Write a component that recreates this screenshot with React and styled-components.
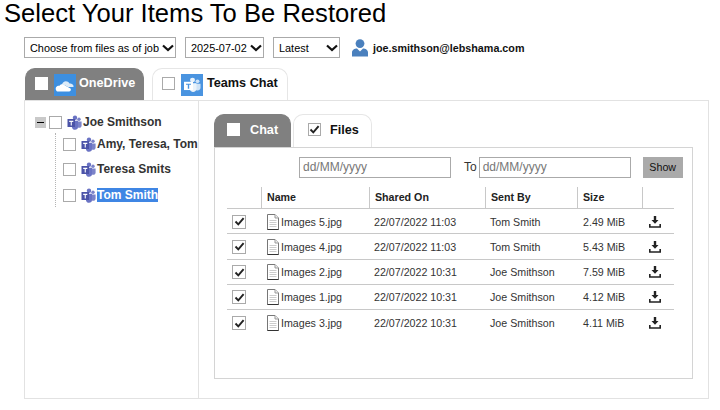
import React from 'react'
import styled, { createGlobalStyle } from 'styled-components'

const GlobalStyle = createGlobalStyle`
  html, body {
    margin: 0;
    padding: 0;
    background: #fff;
    font-family: "Liberation Sans", Arial, sans-serif;
  }
`

const chevron = encodeURIComponent(
  '<svg xmlns="http://www.w3.org/2000/svg" width="12" height="8" viewBox="0 0 12 8"><path d="M1 1.5 L6 6 L11 1.5" fill="none" stroke="#111" stroke-width="2.2"/></svg>'
)

const Page = styled.div`
  width: 720px;
  height: 410px;
  overflow: hidden;
  box-sizing: border-box;
`
const Title = styled.h1`
  margin: 0;
  padding: 0 0 0 4px;
  height: 37px;
  font-size: 25.6px;
  line-height: 26px;
  font-weight: 400;
  color: #000;
`
const Toolbar = styled.div`
  display: flex;
  align-items: center;
  height: 21px;
  padding-left: 24px;
`
const Select = styled.select`
  box-sizing: border-box;
  appearance: none;
  width: ${p => p.$width}px;
  height: 21px;
  margin-right: ${p => p.$gap}px;
  padding: 0 0 0 5px;
  border: 1px solid #aaa;
  border-radius: 0;
  background: #fff url("data:image/svg+xml,${chevron}") no-repeat right 1px center;
  color: #000;
  font-family: inherit;
  font-size: 10.9px;
`
const UserMail = styled.span`
  display: flex;
  align-items: center;
  gap: 5px;
  margin-left: 12px;
  font-size: 10.75px;
  font-weight: 700;
  color: #111;
`
const TabRow = styled.div`
  display: flex;
  align-items: flex-end;
  gap: ${p => p.$gap}px;
  height: ${p => p.$height}px;
  margin-top: ${p => p.$top || 0}px;
  padding-left: ${p => p.$left}px;
`
const Tab = styled.div`
  box-sizing: border-box;
  display: flex;
  align-items: center;
  width: ${p => p.$width}px;
  height: 100%;
  padding: 0 0 3px ${p => p.$pad}px;
  border: 1px solid ${p => (p.$active ? '#e6e6e6' : '#808080')};
  border-bottom: 0;
  border-radius: 10px 10px 0 0;
  background: ${p => (p.$active ? '#fff' : '#808080')};
  color: ${p => (p.$active ? '#111' : '#fff')};
  font-size: 12.67px;
  font-weight: 700;
`
const TabLabel = styled.span`
  margin-left: ${p => p.$left}px;
`
const TabBox = styled.span`
  box-sizing: border-box;
  display: inline-block;
  width: 13px;
  height: 13px;
  background: #fff;
  border: 1px solid ${p => (p.$plain ? '#aaa' : '#fff')};
`
const BrandIcon = styled.svg`
  display: block;
  margin-left: ${p => p.$left}px;
  margin-top: ${p => p.$top || 0}px;
  flex: none;
`
const MainPanel = styled.div`
  box-sizing: border-box;
  display: grid;
  grid-template-columns: 174px 1fr;
  width: 685px;
  height: 299px;
  margin-left: 24px;
  border: 1px solid #e2e2e2;
`
const TreePane = styled.div`
  position: relative;
  border-right: 1px solid #e2e2e2;
  padding-top: 14px;
  overflow: hidden;
`
const TreeRow = styled.div`
  display: flex;
  align-items: center;
  height: 14px;
  margin-bottom: ${p => p.$gap}px;
  padding-left: ${p => p.$left}px;
  font-size: 12px;
  font-weight: 700;
  color: #333;
  white-space: nowrap;
`
const Expander = styled.span`
  display: flex;
  align-items: center;
  justify-content: center;
  width: 11px;
  height: 11px;
  margin-right: 3px;
  background: #c9c9c9;
  &::before {
    content: '';
    width: 7px;
    height: 1px;
    background: #000;
  }
`
const TreeLine = styled.span`
  position: absolute;
  left: 30px;
  top: 32px;
  height: 74px;
  border-left: 1px dotted #b5b5b5;
`
const TreeLabel = styled.span`
  margin-left: 1px;
  background: ${p => (p.$selected ? '#3f86e4' : 'transparent')};
  color: ${p => (p.$selected ? '#fff' : '#333')};
`
const BoxFrame = styled.span`
  box-sizing: border-box;
  display: flex;
  align-items: center;
  justify-content: center;
  flex: none;
  width: ${p => p.$size || 13}px;
  height: ${p => p.$size || 13}px;
  border: 1px solid #aaa;
  background: #fff;
`
const ContentPane = styled.div`
  padding: 13px 15px 0 15px;
`
const FilesPanel = styled.div`
  box-sizing: border-box;
  height: 232px;
  border: 1px solid #d4d4d4;
  padding-top: 9px;
`
const DateRow = styled.div`
  display: flex;
  align-items: center;
  height: 21px;
  padding-left: 84px;
`
const DateInput = styled.div`
  box-sizing: border-box;
  width: 152px;
  height: 21px;
  padding-left: 3px;
  border: 1px solid #aaa;
  color: #777;
  font-size: 12px;
  line-height: 19px;
`
const ToLabel = styled.span`
  margin: 0 2px 0 13px;
  font-size: 12px;
  color: #333;
  position: relative;
  top: -1px;
`
const ShowButton = styled.div`
  width: 40px;
  height: 21px;
  margin-left: 12px;
  background: #aaa;
  color: #111;
  font-size: 10.67px;
  line-height: 21px;
  text-align: center;
`
const Table = styled.div`
  margin: 9px 0 0 12px;
  width: 447px;
`
const Row = styled.div`
  display: grid;
  grid-template-columns: 34px 108px 116px 92px 65px 32px;
  height: ${p => (p.$head ? 22 : 25.25)}px;
  box-sizing: border-box;
  border-bottom: 1px solid #c8c8c8;
  font-size: 10.67px;
  font-weight: ${p => (p.$head ? 700 : 400)};
  color: ${p => (p.$head ? '#222' : '#333')};
  &:last-child {
    border-bottom: 0;
  }
`
const HeadCell = styled.div`
  display: flex;
  align-items: center;
  padding: 0 0 2px 5px;
  border-left: ${p => (p.$first ? '0' : '1px solid #c8c8c8')};
`
const Cell = styled.div`
  display: flex;
  align-items: center;
  gap: 1px;
  padding: 1px 0 0 ${p => p.$left}px;
`

const Check = ({ checked, size }) => (
  <BoxFrame $size={size}>
    {checked && (
      <svg width="11" height="11" viewBox="0 0 11 11">
        <path d="M1.5 5.5 L4.3 8.3 L9.6 2.2" fill="none" stroke="#222" strokeWidth="1.9" />
      </svg>
    )}
  </BoxFrame>
)

const UserIcon = () => (
  <svg width="16" height="18" viewBox="0 0 16 18">
    <circle cx="8" cy="4.6" r="4.4" fill="#4a80bd" />
    <path d="M0 17.5 V13.5 C0 11 2.5 9.5 5 9.5 L8 12.5 L11 9.5 C13.5 9.5 16 11 16 13.5 V17.5 Z" fill="#4a80bd" />
  </svg>
)

const OneDriveIcon = () => (
  <BrandIcon $left={6} $top={3} width="22" height="22" viewBox="0 0 22 22">
    <rect width="22" height="22" fill="#3d8fe0" />
    <path d="M8 11 C8.5 7 13.5 6 15.5 9.5 C18 9.5 20 11 19.5 13 L14 13 L9.5 10.5 Z" fill="#dcebf8" />
    <path d="M2 16 C1 13.5 3 11.5 5.5 11.8 C7 9.5 10 10 11 11.5 L16.5 14.5 C17.5 16 16.5 17.5 15 17.5 H4 C3 17.5 2.5 17 2 16 Z" fill="#fff" />
  </BrandIcon>
)

const TeamsTileIcon = () => (
  <BrandIcon $left={6} $top={3} width="22" height="22" viewBox="0 0 22 24" preserveAspectRatio="none">
    <rect width="22" height="24" fill="#4a94e0" />
    <circle cx="16.5" cy="8" r="2" fill="#cfe3f6" />
    <circle cx="11.5" cy="6.5" r="2.5" fill="#eaf3fb" />
    <path d="M13 10.5 H19.5 V15 C19.5 17 18 18 16.5 18 C14.5 18 13 17 13 15 Z" fill="#cfe3f6" />
    <path d="M9 10 H15.5 V16 C15.5 18 14 19.5 12 19.5 C10.5 19.5 9.5 18.5 9 17.5 Z" fill="#eaf3fb" />
    <rect x="3" y="8.5" width="9" height="9" fill="#fff" />
    <path d="M5 10.5 H10 V11.8 H8.2 V16 H6.8 V11.8 H5 Z" fill="#4a94e0" />
  </BrandIcon>
)

const TeamsIcon = () => (
  <BrandIcon $left={5} width="15" height="15" viewBox="0 0 15 15">
    <circle cx="12" cy="4.2" r="1.7" fill="#7b83c9" />
    <circle cx="8" cy="2.8" r="2.2" fill="#6a73c4" />
    <path d="M10 6.5 H14.6 V10.5 C14.6 12 13.5 12.8 12.2 12.8 C11 12.8 10 12 10 10.5 Z" fill="#7b83c9" />
    <path d="M5 5.8 H11 V12 C11 13.7 9.8 14.8 8 14.8 C6.5 14.8 5.4 14 5 12.5 Z" fill="#6a73c4" />
    <rect x="0.5" y="4" width="7.5" height="8" fill="#4b53a8" />
    <path d="M2.2 5.8 H6.3 V6.9 H4.8 V10.4 H3.7 V6.9 H2.2 Z" fill="#fff" />
  </BrandIcon>
)

const FileIcon = () => (
  <svg width="14" height="16" viewBox="0 0 14 16">
    <path d="M1.5 .5 H9 L12.5 4 V15.5 H1.5 Z" fill="#fff" stroke="#777" />
    <path d="M9 .5 V4 H12.5" fill="#eee" stroke="#999" />
    <path d="M3.5 6.5 H10.5 M3.5 8.5 H10.5 M3.5 10.5 H10.5 M3.5 12.5 H10.5" stroke="#ccc" />
    <path d="M1.5 15.5 H12.5" stroke="#333" />
  </svg>
)

const DownloadIcon = () => (
  <svg width="12" height="12" viewBox="0 0 12 12">
    <path d="M4.8 0 H7.2 V4 H9.5 L6 7.8 L2.5 4 H4.8 Z" fill="#222" />
    <path d="M.8 8 V11 H11.2 V8" fill="none" stroke="#222" strokeWidth="1.6" />
  </svg>
)

const files = [
  { name: 'Images 5.jpg', date: '22/07/2022 11:03', by: 'Tom Smith', size: '2.49 MiB' },
  { name: 'Images 4.jpg', date: '22/07/2022 11:03', by: 'Tom Smith', size: '5.43 MiB' },
  { name: 'Images 2.jpg', date: '22/07/2022 10:31', by: 'Joe Smithson', size: '7.59 MiB' },
  { name: 'Images 1.jpg', date: '22/07/2022 10:31', by: 'Joe Smithson', size: '4.12 MiB' },
  { name: 'Images 3.jpg', date: '22/07/2022 10:31', by: 'Joe Smithson', size: '4.11 MiB' },
]

export default function App() {
  return (
    <Page>
      <GlobalStyle />
      <Title>Select Your Items To Be Restored</Title>
      <Toolbar>
        <Select $width={152} $gap={9} defaultValue="job">
          <option value="job">Choose from files as of job</option>
        </Select>
        <Select $width={79} $gap={9} defaultValue="d">
          <option value="d">2025-07-02</option>
        </Select>
        <Select $width={67} $gap={0} defaultValue="l">
          <option value="l">Latest</option>
        </Select>
        <UserMail>
          <UserIcon />
          joe.smithson@lebshama.com
        </UserMail>
      </Toolbar>
      <TabRow $gap={8} $height={32} $left={25} $top={10}>
        <Tab $width={119} $pad={9}>
          <TabBox />
          <OneDriveIcon />
          <TabLabel $left={3}>OneDrive</TabLabel>
        </Tab>
        <Tab $active $width={136} $pad={9}>
          <TabBox $plain />
          <TeamsTileIcon />
          <TabLabel $left={4}>Teams Chat</TabLabel>
        </Tab>
      </TabRow>
      <MainPanel>
        <TreePane>
          <TreeRow $left={10} $gap={8}>
            <Expander />
            <Check />
            <TeamsIcon />
            <TreeLabel>Joe Smithson</TreeLabel>
          </TreeRow>
          <TreeLine />
          <TreeRow $left={38} $gap={11}>
            <Check />
            <TeamsIcon />
            <TreeLabel>Amy, Teresa, Tom</TreeLabel>
          </TreeRow>
          <TreeRow $left={38} $gap={12}>
            <Check />
            <TeamsIcon />
            <TreeLabel>Teresa Smits</TreeLabel>
          </TreeRow>
          <TreeRow $left={38} $gap={0}>
            <Check />
            <TeamsIcon />
            <TreeLabel $selected>Tom Smith</TreeLabel>
          </TreeRow>
        </TreePane>
        <ContentPane>
          <TabRow $gap={2} $height={33} $left={0}>
            <Tab $width={77} $pad={12}>
              <TabBox />
              <TabLabel $left={10}>Chat</TabLabel>
            </Tab>
            <Tab $active $width={79} $pad={14}>
              <Check checked />
              <TabLabel $left={9}>Files</TabLabel>
            </Tab>
          </TabRow>
          <FilesPanel>
            <DateRow>
              <DateInput>dd/MM/yyyy</DateInput>
              <ToLabel>To</ToLabel>
              <DateInput>dd/MM/yyyy</DateInput>
              <ShowButton>Show</ShowButton>
            </DateRow>
            <Table>
              <Row $head>
                <HeadCell $first />
                <HeadCell>Name</HeadCell>
                <HeadCell>Shared On</HeadCell>
                <HeadCell>Sent By</HeadCell>
                <HeadCell>Size</HeadCell>
                <HeadCell />
              </Row>
              {files.map(f => (
                <Row key={f.name}>
                  <Cell $left={5}><Check checked size={14} /></Cell>
                  <Cell $left={5}><FileIcon />{f.name}</Cell>
                  <Cell $left={5}>{f.date}</Cell>
                  <Cell $left={5}>{f.by}</Cell>
                  <Cell $left={6}>{f.size}</Cell>
                  <Cell $left={7}><DownloadIcon /></Cell>
                </Row>
              ))}
            </Table>
          </FilesPanel>
        </ContentPane>
      </MainPanel>
    </Page>
  )
}
